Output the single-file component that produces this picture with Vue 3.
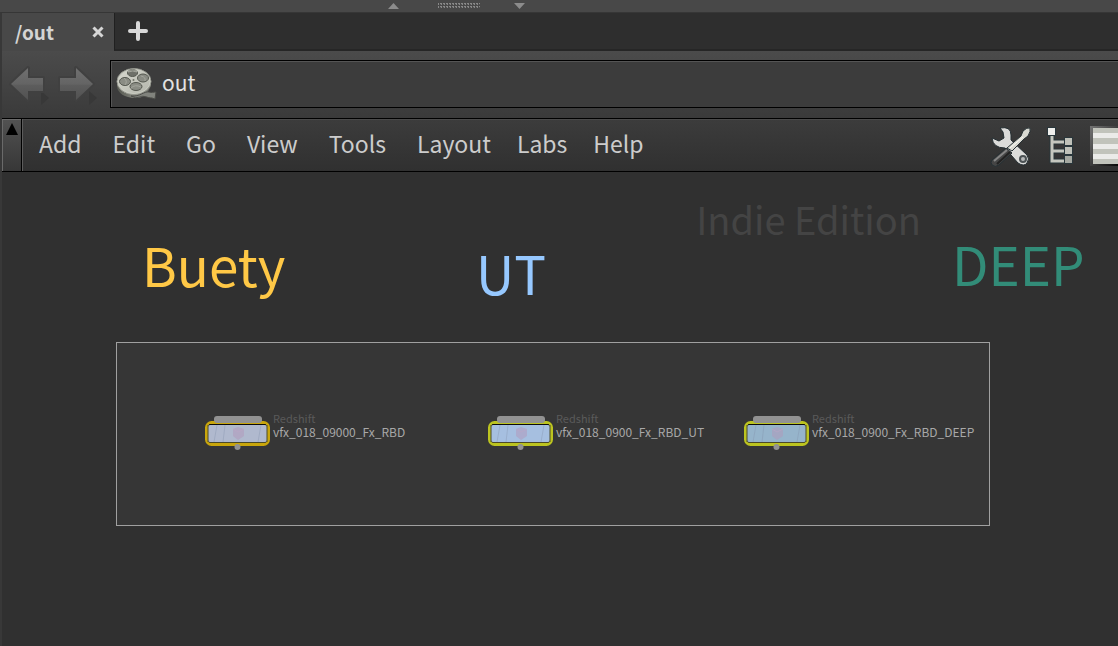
<script setup>
import { ref } from 'vue'

const path = ref('out')
const menus = ['Add', 'Edit', 'Go', 'View', 'Tools', 'Layout', 'Labs', 'Help']

const notes = [
  { text: 'Buety', x: 142, y: 52, color: '#ffc846' },
  { text: 'UT', x: 476, y: 60, color: '#96c8ff' },
  { text: 'DEEP', x: 952, y: 51, color: '#328c78' },
]

const nodes = [
  { name: 'vfx_018_09000_Fx_RBD', x: 205, fill: '#b0b9ce', ring: '#c9a60c' },
  { name: 'vfx_018_0900_Fx_RBD_UT', x: 488, fill: '#a6bfe0', ring: '#bcc420' },
  { name: 'vfx_018_0900_Fx_RBD_DEEP', x: 744, fill: '#96b4cb', ring: '#bcc420' },
]
</script>

<template>
  <main class="pane">
    <div class="splitter" aria-hidden="true">
      <svg width="138" height="12" viewBox="0 0 138 12">
        <defs>
          <pattern id="grip" width="3" height="3" patternUnits="userSpaceOnUse">
            <rect width="3" height="3" fill="#484848" />
            <rect x="1" width="2" height="2" fill="#888" />
            <rect x="1" y="1" width="1" height="1" fill="#555" />
          </pattern>
        </defs>
        <path d="M0 9 5.500 3 11 9Z" fill="#8c8c8c" />
        <rect x="50" y="3" width="42" height="6" fill="url(#grip)" />
        <path d="M126 3h11l-5.500 6Z" fill="#8c8c8c" />
      </svg>
    </div>

    <div class="frame">
      <div class="tabs">
        <div class="tab">
          <span>/out</span>
          <button type="button" aria-label="Close tab">
            <svg width="12" height="12" viewBox="0 0 12 12">
              <path d="m1.500 1.500 9 9m0-9-9 9" stroke="#d6d6d6" stroke-width="3" />
            </svg>
          </button>
        </div>
        <button type="button" class="add" aria-label="New tab">
          <svg width="20" height="20" viewBox="0 0 20 20">
            <path d="M10 2v16M2 10h16" stroke="#d8d8d8" stroke-width="4" stroke-linecap="round" />
          </svg>
        </button>
      </div>

      <div class="location">
        <svg class="defs" width="0" height="0" aria-hidden="true">
          <defs>
            <linearGradient id="arrowFill" x2="0" y2="1">
              <stop offset="0" stop-color="#707070" />
              <stop offset=".5" stop-color="#646464" />
              <stop offset=".55" stop-color="#5c5c5c" />
              <stop offset="1" stop-color="#525252" />
            </linearGradient>
          </defs>
        </svg>
        <button type="button" aria-label="Back">
          <svg width="42" height="44" viewBox="0 0 42 44">
            <path d="M33 29v14l8-7Z" fill="#383838" />
            <path d="M3 22 20 6v10h15v13H20v9Z" fill="url(#arrowFill)" stroke="#404040" stroke-width="4" stroke-linejoin="round" paint-order="stroke" />
          </svg>
        </button>
        <button type="button" aria-label="Forward">
          <svg width="42" height="44" viewBox="0 0 42 44">
            <path d="M33 29v14l8-7Z" fill="#383838" />
            <path d="M4 16h16V6l17 16-17 16v-9H4Z" fill="url(#arrowFill)" stroke="#404040" stroke-width="4" stroke-linejoin="round" paint-order="stroke" />
          </svg>
        </button>
        <label class="path">
          <svg width="44" height="36" viewBox="0 0 44 36" aria-hidden="true">
            <defs>
              <linearGradient id="film" x2="1" y2="0">
                <stop offset="0" stop-color="#55574f" />
                <stop offset=".7" stop-color="#92948c" />
                <stop offset="1" stop-color="#62645e" />
              </linearGradient>
              <linearGradient id="reel" x2="1" y2="1">
                <stop offset="0" stop-color="#d8d9d0" />
                <stop offset="1" stop-color="#b2b4aa" />
              </linearGradient>
            </defs>
            <path d="M2 15v5c0 7 8 12 18 12 4 0 8-1 11-3l5-9V15Z" fill="url(#film)" />
            <ellipse cx="19" cy="15.500" rx="17" ry="13" fill="url(#reel)" stroke="#94968d" />
            <ellipse cx="19" cy="15.500" rx="16" ry="12" fill="none" stroke="#c9cbc1" />
            <g fill="#8a8c84" stroke="#555850">
              <ellipse cx="17.500" cy="7" rx="5" ry="3.500" fill="#6e7069" />
              <ellipse cx="28" cy="12" rx="5.500" ry="4" />
              <ellipse cx="10" cy="15.500" rx="5.500" ry="4" />
              <ellipse cx="21" cy="20.500" rx="6" ry="4" />
            </g>
            <path d="M13 6a5 4 0 0 1 9 0q-4-2-9 0ZM26 10q5 1 4 5m-21-3q4 3 1 7M16 22q4-4 10-1" fill="none" stroke="#a4a69d" />
            <circle cx="18.500" cy="14" r="1" fill="#72746b" />
            <path d="M16 30c9 1 13-5 18-4 3 1 4 0 7 0l-1 7-3-1c-5 0-8-3-12-1q-4 2-9-1" fill="#81837d" stroke="#4c4d49" />
          </svg>
          <input v-model="path" type="text" aria-label="Network path" spellcheck="false">
        </label>
      </div>

      <div class="toolbar">
        <button type="button" class="stow" aria-label="Collapse menu bar">
          <svg width="12" height="12" viewBox="0 0 12 12"><path d="M0 12 6 0l6 12Z" /></svg>
        </button>
        <nav aria-label="Network menu">
          <button v-for="menu in menus" :key="menu" type="button">{{ menu }}</button>
        </nav>
        <div class="tools">
          <button type="button" aria-label="Tools">
            <svg width="42" height="42" viewBox="0 0 42 42">
              <g stroke="#252f33" stroke-width="1">
                <path d="M10 3Q21 1 21 10v5l16 15q3 4 0 8t-9 0L15 23Q3 23 2 13l7 3 5-3-1-6Z" fill="#dcdcda" />
                <circle cx="33" cy="34" r="3" fill="#b8baba" stroke="#4c5254" stroke-width="2" />
                <path d="M2 35 16 23l6 5L9 40q-4 3-7 0-2-3 0-5Z" fill="#454545" />
                <path d="m17 23 14-12 2-5q4-4 7-3 1 3-2 8l-4 3-12 12Z" fill="#d8d9d2" />
              </g>
              <path d="M4 36 17 25" stroke="#858585" stroke-width="2" />
              <path d="M7 39 20 27" stroke="#222" stroke-width="2" />
              <path d="m20 23 13-11" stroke="#fafaf4" stroke-width="1" />
            </svg>
          </button>
          <button type="button" aria-label="Tree view">
            <svg width="28" height="38" viewBox="0 0 28 38">
              <path d="M5 9v25h14M5 15h14M5 24h14" fill="none" stroke="#29363b" stroke-width="5" />
              <path d="M5 9v25h14M5 15h14M5 24h14" fill="none" stroke="#c4c6be" stroke-width="3" />
              <g stroke="#29363b">
                <rect x=".5" y=".5" width="8" height="8" fill="#eeeeec" />
                <rect x="17.500" y="10.500" width="8" height="8" fill="#bfc1b9" />
                <rect x="17.500" y="19.500" width="8" height="8" fill="#bfc1b9" />
                <rect x="17.500" y="28.500" width="8" height="8" fill="#a5a8a1" />
              </g>
            </svg>
          </button>
          <button type="button" aria-label="List view">
            <svg width="28" height="40" viewBox="0 0 28 40">
              <defs>
                <linearGradient id="bezel" x2="1" y2="1">
                  <stop offset="0" stop-color="#747474" />
                  <stop offset="1" stop-color="#080808" />
                </linearGradient>
              </defs>
              <path d="M0 0h28v40H0Z" fill="url(#bezel)" />
              <path d="M3 2h25v36H3Z" fill="#c1c3bb" />
              <path d="M3 7h25v5H3Zm0 11h25v5H3Zm0 10h25v5H3Z" fill="#ebebe9" />
            </svg>
          </button>
        </div>
      </div>

      <section class="network" aria-label="Network editor">
        <div class="backdrop"></div>
        <p class="edition">Indie Edition</p>
        <p
          v-for="note in notes"
          :key="note.text"
          class="note"
          :style="{ left: note.x + 'px', top: note.y + 'px', color: note.color }"
        >{{ note.text }}</p>
        <div v-for="node in nodes" :key="node.name" class="node" :style="{ left: node.x + 'px' }">
          <svg width="66" height="36" viewBox="0 0 66 36" aria-hidden="true">
            <rect x="1.500" y="7.500" width="62" height="22" rx="5" fill="#343434" :stroke="node.ring" stroke-width="3" />
            <rect x="9" y="1" width="48" height="7" rx="3" fill="#929292" />
            <rect x="3" y="9" width="59" height="19" rx="3" fill="#4c4a28" />
            <rect x="4" y="9" width="57" height="3" rx="1" fill="#0c0c0c" />
            <rect x="3" y="10" width="59" height="17" rx="2" :fill="node.fill" />
            <path d="M3 10v17M62 10v17" stroke="#4c4a28" />
            <path d="m12 10-3 17m11-17-2 17M56 10l-3 17" stroke="#8290a8" stroke-opacity=".35" />
            <path d="m28 14 5-2 6 2v7l-6 4-5-4Z" fill="#b297b9" fill-opacity=".5" />
            <path d="m28 14 5 3 6-3" fill="none" stroke="#bda5c6" stroke-opacity=".5" />
            <circle cx="32.500" cy="32" r="3" fill="#929292" />
          </svg>
          <div class="caption">
            <span class="type">Redshift</span>
            <span>{{ node.name }}</span>
          </div>
        </div>
      </section>
    </div>
  </main>
</template>

<style>
body {
  margin: 0;
  background: #303030;
}
</style>

<style scoped>
.pane {
  display: flex;
  flex-direction: column;
  min-height: 100vh;
  overflow: hidden;
  box-sizing: border-box;
  background: #484848;
  color: #ccc;
  font-family: "Noto Sans CJK JP", "Noto Sans", sans-serif;
}
button {
  display: flex;
  align-items: center;
  margin: 0;
  padding: 0;
  border: 0;
  background: none;
  color: inherit;
  font: inherit;
}
svg {
  display: block;
  flex: none;
}
p {
  margin: 0;
}
.splitter {
  display: flex;
  justify-content: center;
  height: 12px;
  padding-right: 204px;
}
.frame {
  display: flex;
  flex: 1;
  flex-direction: column;
  border-top: 1px solid #363636;
  border-left: 2px solid #383838;
}
.tabs {
  display: flex;
  height: 38px;
  background: #2e2e2e;
}
.tab {
  display: flex;
  flex: none;
  align-items: center;
  justify-content: space-between;
  box-sizing: border-box;
  width: 112px;
  padding: 0 10px 0 13px;
  background: #484848;
  color: #d4d4d4;
  font-size: 19px;
  font-weight: 700;
  line-height: 38px;
}
.add {
  flex: 1;
  padding-left: 13px;
  border-bottom: 2px solid #262626;
  border-left: 1px solid #202020;
}
.location {
  display: flex;
  align-items: center;
  box-sizing: border-box;
  height: 67px;
  padding-bottom: 1px;
  background: linear-gradient(#4b4b4b, #3a3a3a);
}
.location > button {
  margin-left: 6px;
}
.defs {
  position: absolute;
}
.path {
  display: flex;
  flex: 1;
  align-items: center;
  box-sizing: border-box;
  height: 48px;
  margin-left: 12px;
  padding-left: 4px;
  border: 1px solid #000;
  border-right: 0;
  background: #3c3c3c;
  box-shadow: inset 1px 1px #555;
}
.path input {
  flex: 1;
  min-width: 0;
  margin: 0;
  padding: 0 0 4px 3px;
  border: 0;
  outline: 0;
  background: none;
  color: #e2e2e2;
  font: inherit;
  font-size: 21px;
  line-height: 32px;
}
.toolbar {
  display: flex;
  align-items: center;
  height: 52px;
  border-top: 1px solid #000;
  border-bottom: 1px solid #000;
  background: linear-gradient(#3c3c3c, #303030);
  box-shadow: inset 0 1px #4a4a4a;
}
.stow {
  align-self: stretch;
  align-items: flex-start;
  padding: 4px 3px 0 4px;
  border-right: 1px solid #000;
  background: linear-gradient(#525252, #373737);
  box-shadow: inset 1px 1px #6a6a6a, 1px 0 #5c5c5c;
}
nav {
  display: flex;
  gap: 31px;
  padding: 0 0 4px 17px;
  font-size: 23px;
  line-height: 34px;
}
nav button:nth-child(n + 7) {
  margin-left: -5px;
}
.tools {
  display: flex;
  align-items: center;
  gap: 15px;
  margin-left: auto;
  padding-top: 2px;
}
.network {
  position: relative;
  flex: 1;
  background: #303030;
}
.backdrop {
  position: absolute;
  top: 170px;
  left: 114px;
  box-sizing: border-box;
  width: 874px;
  height: 184px;
  border: 1px solid #a0a0a0;
  background: #363636;
}
.edition {
  position: absolute;
  top: 19px;
  right: 197px;
  color: #444;
  font-size: 38px;
  line-height: 56px;
}
.note {
  position: absolute;
  margin-left: -2px;
  font-size: 53px;
  line-height: 80px;
}
.node {
  position: absolute;
  top: 243px;
  display: flex;
  margin-left: -2px;
}
.caption {
  display: flex;
  flex-direction: column;
  margin-top: -3px;
  padding-left: 2px;
  color: #a8a8a8;
  font-size: 12px;
  line-height: 14px;
  white-space: nowrap;
}
.type {
  color: #5a5a5a;
  font-size: 11px;
  line-height: 13px;
}
</style>
